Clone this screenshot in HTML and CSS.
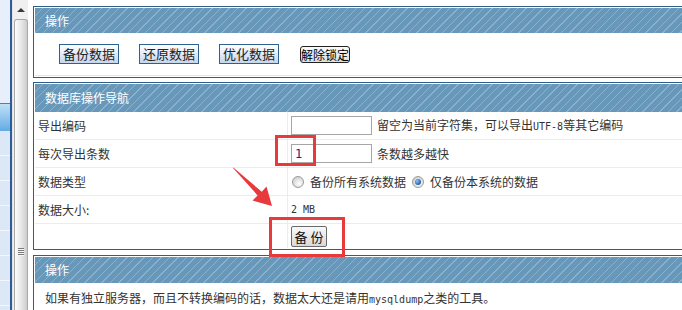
FILE: index.html
```html
<!DOCTYPE html>
<html lang="zh-CN">
<head>
  <meta charset="UTF-8">
  <title>数据库备份</title>
  <link rel="stylesheet" href="styles.css">
</head>
<body>
  <div class="frame">
    <!-- 左侧菜单 -->
    <aside class="sidenav">
      <div class="sidenav-top"></div>
      <div class="sidenav-current"></div>
      <div class="sidenav-item"></div>
      <div class="sidenav-item"></div>
      <div class="sidenav-item"></div>
      <div class="sidenav-item"></div>
      <div class="sidenav-item"></div>
      <div class="sidenav-item"></div>
      <div class="sidenav-item"></div>
    </aside>

    <!-- 滚动条 -->
    <div class="scrollbar">
      <div class="scroll-up"></div>
      <div class="scroll-thumb"><div class="scroll-grip"></div></div>
    </div>

    <main class="content">
      <section class="panel panel-tools">
        <div class="panel-head">操作</div>
        <div class="tools">
          <button class="btn-blue">备份数据</button>
          <button class="btn-blue">还原数据</button>
          <button class="btn-blue">优化数据</button>
          <button class="btn-plain">解除锁定</button>
        </div>
      </section>

      <section class="panel panel-nav">
        <div class="panel-head">数据库操作导航</div>
        <div class="form">
          <div class="form-label">导出编码</div>
          <div class="form-value">
            <input class="text-input" type="text" value="">
            <span>留空为当前字符集，可以导出<span class="en">UTF-8</span>等其它编码</span>
          </div>

          <div class="form-label">每次导出条数</div>
          <div class="form-value">
            <input class="text-input num" type="text" value="1">
            <span>条数越多越快</span>
          </div>

          <div class="form-label">数据类型</div>
          <div class="form-value">
            <label class="radio-label"><span class="radio"></span>备份所有系统数据</label>
            <label class="radio-label"><span class="radio on"></span>仅备份本系统的数据</label>
          </div>

          <div class="form-label">数据大小:</div>
          <div class="form-value"><span class="en">2 MB</span></div>

          <div class="form-label last"></div>
          <div class="form-value last">
            <button class="btn-submit">备 份</button>
          </div>
        </div>
      </section>

      <section class="panel panel-tip">
        <div class="panel-head">操作</div>
        <div class="tip">如果有独立服务器，而且不转换编码的话，数据太大还是请用<span class="en">mysqldump</span>之类的工具。</div>
      </section>
    </main>

    <!-- 标注 -->
    <div class="mark-box mark-count"></div>
    <div class="mark-box mark-submit"></div>
    <svg class="mark-arrow" width="682" height="310" viewBox="0 0 682 310">
      <polygon points="233.5,167.5 234.5,168.5 261.8,191.8 266.5,186.5 272,206 252.5,200.5 257.6,195.4 233,168" fill="#e8393c"/>
    </svg>
  </div>
</body>
</html>
```

FILE: styles.css
```css
* {
  box-sizing: border-box;
}
html, body {
  margin: 0;
  padding: 0;
}
body {
  width: 682px;
  height: 310px;
  overflow: hidden;
  background: #fff;
  font-family: "Noto Sans CJK SC", "Liberation Sans", sans-serif;
  font-size: 12px;
  line-height: 18px;
  color: #333;
}
.frame {
  position: relative;
  display: flex;
  height: 310px;
}

/* 左侧菜单 */
.sidenav {
  width: 12px;
  flex-shrink: 0;
  display: flex;
  flex-direction: column;
  background: #dce8f6;
  border-right: 2px solid #2b5c9e;
}
.sidenav-top {
  height: 104px;
  background: #e6effa;
  border-bottom: 1px solid #4a7fbf;
}
.sidenav-current {
  height: 27px;
  background: linear-gradient(#bfe0f8, #64aae3);
}
.sidenav-item {
  height: 25px;
  border-bottom: 1px solid #f3f7fc;
}

/* 滚动条 */
.scrollbar {
  width: 16px;
  flex-shrink: 0;
  display: flex;
  flex-direction: column;
  align-items: center;
  background: #f0f0f0;
  border-left: 1px solid #e2e2e2;
}
.scroll-up {
  height: 19px;
  width: 100%;
  display: flex;
  align-items: center;
  justify-content: center;
}
.scroll-up::before {
  content: "";
  border-left: 4px solid transparent;
  border-right: 4px solid transparent;
  border-bottom: 4px solid #3a3a3a;
}
.scroll-thumb {
  flex: 1;
  width: 14px;
  display: flex;
  align-items: flex-end;
  justify-content: center;
  padding-bottom: 54px;
  border: 1px solid #a8a8a8;
  border-bottom: none;
  border-radius: 3px 3px 0 0;
  background: linear-gradient(90deg, #fdfdfd, #e6e6e6 55%, #cdcdcd);
}
.scroll-grip {
  width: 6px;
  height: 8px;
  background: repeating-linear-gradient(#7a7a7a 0 1px, #f6f6f6 1px 2px);
}

/* 主区域 */
.content {
  flex: 1;
  min-width: 0;
  padding: 6px 0 0 5px;
}
.panel {
  margin-right: -30px;
  margin-bottom: 4px;
  padding: 1px;
  border: 1px solid #2f5f86;
  background: #fff;
}
.panel-head {
  height: 25px;
  line-height: 25px;
  padding-left: 10px;
  color: #fff;
  background: repeating-linear-gradient(135deg, #6898b9 0 5px, #8ab1cd 5px 6px);
}
.panel-nav {
  margin-bottom: 5px;
}
.panel-nav .panel-head {
  height: 28px;
  line-height: 28px;
}
.panel-tip .panel-head {
  height: 26px;
  line-height: 26px;
}

/* 操作按钮 */
.tools {
  height: 43px;
  display: flex;
  align-items: center;
  gap: 20px;
  padding-left: 24px;
  border-bottom: 1px solid #e6e6e6;
}
.btn-blue {
  width: 60px;
  height: 20px;
  padding: 0;
  border: 1px solid #2d6290;
  background: linear-gradient(#ffffff, #c6d6ee);
  font-family: inherit;
  font-size: 13px;
  line-height: 18px;
  color: #222;
}
.btn-plain {
  width: 50px;
  height: 17px;
  margin-left: 1px;
  padding: 0;
  border: 1px solid #222;
  border-radius: 3px;
  background: linear-gradient(#fbfbfb, #dedede);
  font-family: inherit;
  font-size: 12px;
  line-height: 15px;
  color: #000;
}

/* 表单 */
.form {
  display: grid;
  grid-template-columns: 253px 1fr;
}
.form-label,
.form-value {
  height: 28px;
  display: flex;
  align-items: center;
  border-bottom: 1px solid #ececec;
  padding-left: 3px;
}
.form-label {
  border-right: 1px solid #ececec;
}
.form-value {
  gap: 5px;
}
.form-label.last,
.form-value.last {
  height: 24px;
  border-bottom: none;
}
.text-input {
  width: 81px;
  height: 19px;
  padding: 0 3px;
  border: 1px solid #a6a6a6;
  font-family: "DejaVu Sans Mono", monospace;
  font-size: 12px;
  color: #3c1a78;
  outline: none;
}
.en {
  font-family: "DejaVu Sans Mono", monospace;
  font-size: 10px;
}
.radio-label {
  display: inline-flex;
  align-items: center;
  gap: 6px;
}
.radio {
  position: relative;
  width: 12px;
  height: 12px;
  margin-left: 1px;
  border: 1px solid #9c9c9c;
  border-radius: 50%;
  background: radial-gradient(circle at 60% 65%, #ffffff, #cfcfcf 80%);
}
.radio.on::after {
  content: "";
  position: absolute;
  left: 2px;
  top: 2px;
  width: 6px;
  height: 6px;
  border-radius: 50%;
  background: radial-gradient(circle at 35% 35%, #8fc3f2, #1d5da8 70%);
}
.btn-submit {
  width: 36px;
  height: 21px;
  margin-top: 1px;
  padding: 0;
  border: 1px solid #6a6a6a;
  border-radius: 2px;
  background: linear-gradient(#f9f9f9, #d9d9d9);
  font-family: inherit;
  font-size: 13px;
  line-height: 19px;
  color: #111;
}

.tip {
  padding: 6px 10px 0;
}

/* 标注 */
.mark-box {
  position: absolute;
  border: 3px solid #e8393c;
}
.mark-count {
  left: 275px;
  top: 135px;
  width: 41px;
  height: 31px;
}
.mark-submit {
  left: 269px;
  top: 217px;
  width: 76px;
  height: 40px;
}
.mark-arrow {
  position: absolute;
  left: 0;
  top: 0;
  pointer-events: none;
}
```
